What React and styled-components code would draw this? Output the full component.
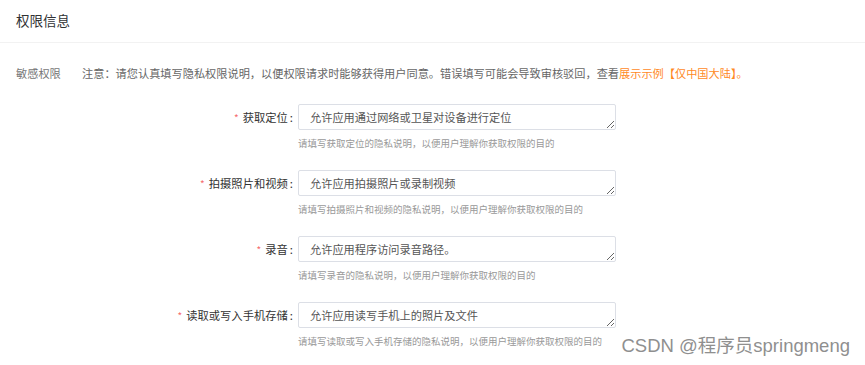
import React from 'react';
import styled, { createGlobalStyle } from 'styled-components';

const GlobalStyle = createGlobalStyle`
  html, body {
    margin: 0;
    padding: 0;
    background: #fff;
    font-family: "Noto Sans CJK SC", "Liberation Sans", sans-serif;
  }
`;

const fields = [
  {
    label: '获取定位',
    value: '允许应用通过网络或卫星对设备进行定位',
    hint: '请填写获取定位的隐私说明，以便用户理解你获取权限的目的',
  },
  {
    label: '拍摄照片和视频',
    value: '允许应用拍摄照片或录制视频',
    hint: '请填写拍摄照片和视频的隐私说明，以便用户理解你获取权限的目的',
  },
  {
    label: '录音',
    value: '允许应用程序访问录音路径。',
    hint: '请填写录音的隐私说明，以便用户理解你获取权限的目的',
  },
  {
    label: '读取或写入手机存储',
    value: '允许应用读写手机上的照片及文件',
    hint: '请填写读取或写入手机存储的隐私说明，以便用户理解你获取权限的目的',
  },
];

const Page = styled.div`
  position: relative;
  width: 865px;
  height: 365px;
  overflow: hidden;
`;

const Header = styled.div`
  height: 42px;
  line-height: 40px;
  padding: 0 16px;
  font-size: 13.5px;
  color: #303133;
  border-bottom: 1px solid #f2f2f2;
`;

const Section = styled.div`
  padding: 22px 16px 0;
`;

const NoticeRow = styled.div`
  display: flex;
  font-size: 11.2px;
  line-height: 16px;
  color: #666;
`;

const RowTitle = styled.span`
  width: 66px;
  flex-shrink: 0;
  color: #777;
`;

const Link = styled.span`
  color: #ff8a1f;
`;

const FieldList = styled.div`
  display: flex;
  flex-direction: column;
  gap: 21px;
  margin-top: 23px;
`;

const Field = styled.div`
  display: grid;
  grid-template-columns: 282px 318px;
  row-gap: 6px;
`;

const Label = styled.label`
  padding-right: 5px;
  text-align: right;
  font-size: 11.3px;
  line-height: 26px;
  color: #333;
`;

const Star = styled.span`
  color: #f56c6c;
  margin-right: 4px;
  font-size: 10px;
`;

const Colon = styled.span`
  margin-left: 2px;
`;

const Input = styled.textarea`
  display: block;
  box-sizing: border-box;
  width: 318px;
  height: 26px;
  margin: 0;
  padding: 4px 11px;
  font-family: inherit;
  font-size: 11.2px;
  line-height: 16px;
  color: #555;
  border: 1px solid #dcdfe6;
  border-radius: 2px;
  outline: none;
  resize: vertical;
  overflow: hidden;
`;

const Hint = styled.div`
  grid-column: 2;
  font-size: 9.5px;
  line-height: 12px;
  color: #999;
`;

const Watermark = styled.div`
  position: absolute;
  right: 15px;
  bottom: 8px;
  font-size: 18.5px;
  line-height: 22px;
  color: #8f8f8f;
  font-family: "Liberation Sans", "Noto Sans CJK SC", sans-serif;
  text-shadow: 0 0 2px #fff;
`;

export default function App() {
  return (
    <Page>
      <GlobalStyle />
      <Header>权限信息</Header>
      <Section>
        <NoticeRow>
          <RowTitle>敏感权限</RowTitle>
          <span>
            注意：请您认真填写隐私权限说明，以便权限请求时能够获得用户同意。错误填写可能会导致审核驳回，查看
            <Link>展示示例【仅中国大陆】。</Link>
          </span>
        </NoticeRow>
        <FieldList>
          {fields.map((f) => (
            <Field key={f.label}>
              <Label>
                <Star>*</Star>
                {f.label}
                <Colon>:</Colon>
              </Label>
              <Input defaultValue={f.value} rows={1} />
              <Hint>{f.hint}</Hint>
            </Field>
          ))}
        </FieldList>
      </Section>
      <Watermark>CSDN @程序员springmeng</Watermark>
    </Page>
  );
}
